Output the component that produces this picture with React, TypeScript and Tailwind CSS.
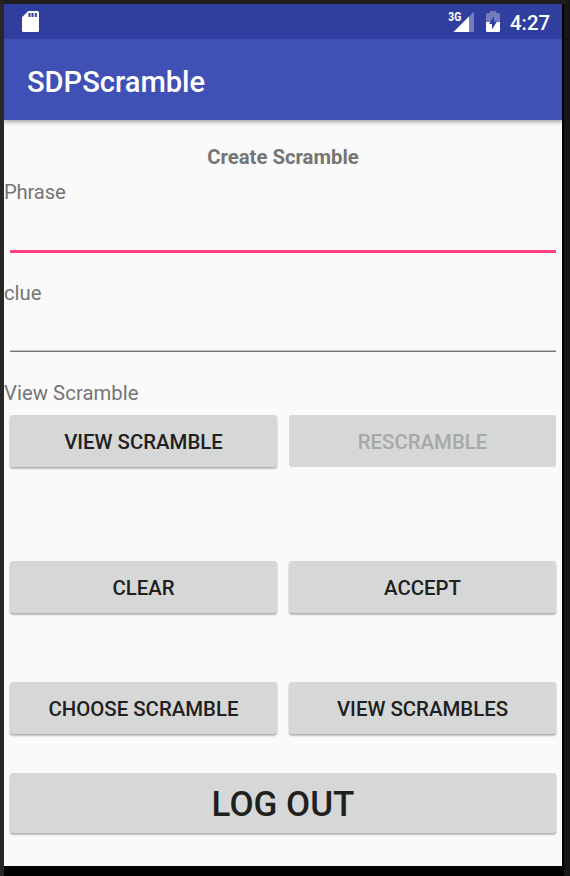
import type { ReactNode } from "react";

function Button({ children, disabled = false, large = false }: { children: ReactNode; disabled?: boolean; large?: boolean }) {
  return (
    <button
      disabled={disabled}
      className={`flex w-full items-center justify-center rounded-[3px] bg-[#d6d8d7] font-medium whitespace-nowrap ${
        large ? "h-[60px] pt-[4px] text-[35px]" : "h-[52px] pt-px text-[20.4px]"
      } ${disabled ? "text-[#a7a9a8]" : "text-[#1f2020] shadow-[0_2px_2px_rgba(0,0,0,0.2),0_1px_2px_rgba(0,0,0,0.16)]"}`}
    >
      {children}
    </button>
  );
}

function SdCard() {
  return (
    <svg width="17" height="21" viewBox="0 0 17 21" fill="none">
      <path d="M6.3 0H15.5Q17 0 17 1.5V19.5Q17 21 15.5 21H1.5Q0 21 0 19.5V6.3Z" fill="#fff" />
      <path d="M6.5 2H8.5V6H6.5ZM9.5 2H11.5V6H9.5ZM12.8 2H14.8V6H12.8Z" fill="#303f9f" />
    </svg>
  );
}

function Signal() {
  return (
    <svg width="27" height="22" viewBox="0 0 27 22">
      <path d="M26 0.5V21H5.5Z" fill="#fff" fillOpacity=".32" />
      <path d="M21 5.5V21H5.5Z" fill="#fff" />
      <text x="0.2" y="9.6" fill="#fff" fontSize="12" fontWeight="700" fontFamily="Roboto, sans-serif" textLength="13" lengthAdjust="spacingAndGlyphs">3G</text>
    </svg>
  );
}

function Battery() {
  return (
    <svg width="14" height="21" viewBox="0 0 14 21">
      <path d="M4 0H10V2H12.5Q14 2 14 3.5V11H0V3.5Q0 2 1.5 2H4Z" fill="#fff" fillOpacity=".32" />
      <path d="M0 11H14V19.5Q14 21 12.5 21H1.5Q0 21 0 19.5Z" fill="#fff" />
      <path d="M8 5L3 13H6V18.5L11 10.5H8Z" fill="#303f9f" />
    </svg>
  );
}

export default function App() {
  return (
    <div className="h-[876px] w-[570px] overflow-hidden border-t-4 border-r-[6px] border-l-4 border-t-[#1d1d1d] border-r-[#161616] border-l-[#292725] bg-black pr-[2px] font-['Roboto',sans-serif]">
      <main className="flex h-[862px] flex-col bg-[#fafafa] text-[20.3px] leading-6 text-[#757575]">
        <header className="shrink-0 bg-[#3f51b5] text-white shadow-[0_2px_4px_rgba(0,0,0,0.36)]">
          <div className="flex h-[35px] items-center bg-[#303f9f] pr-[12px] pl-[18px]">
            <SdCard />
            <div className="ml-auto flex items-center">
              <Signal />
              <span className="ml-[11px]"><Battery /></span>
              <span className="ml-[10px] pt-[3px] text-[20.3px] font-medium">4:27</span>
            </div>
          </div>
          <h1 className="flex h-[81px] items-center pt-[4px] pl-[23px] text-[29.1px] font-medium">SDPScramble</h1>
        </header>
        <h2 className="mt-[25px] text-center font-bold">Create Scramble</h2>
        <label className="mt-[11px] tracking-[-0.2px]">Phrase</label>
        <div className="mx-[6px] mt-[46px] h-[3px] shrink-0 bg-[#ff4081]" />
        <label className="mt-[28px]">clue</label>
        <div className="mx-[6px] mt-[45px] h-[2px] shrink-0 border-t border-b border-t-[#c1c1c1] border-b-[#757575]" />
        <p className="mt-[29px] tracking-[0.05px]">View Scramble</p>
        <div className="mx-[6px] mt-[10px] grid grid-cols-2 gap-x-[12px]">
          <Button>VIEW SCRAMBLE</Button>
          <Button disabled>RESCRAMBLE</Button>
        </div>
        <div className="mx-[6px] mt-[94px] grid grid-cols-2 gap-x-[12px]">
          <Button>CLEAR</Button>
          <Button>ACCEPT</Button>
        </div>
        <div className="mx-[6px] mt-[69px] grid grid-cols-2 gap-x-[12px]">
          <Button>CHOOSE SCRAMBLE</Button>
          <Button>VIEW SCRAMBLES</Button>
        </div>
        <div className="mx-[6px] mt-[39px]">
          <Button large>LOG OUT</Button>
        </div>
      </main>
    </div>
  );
}
